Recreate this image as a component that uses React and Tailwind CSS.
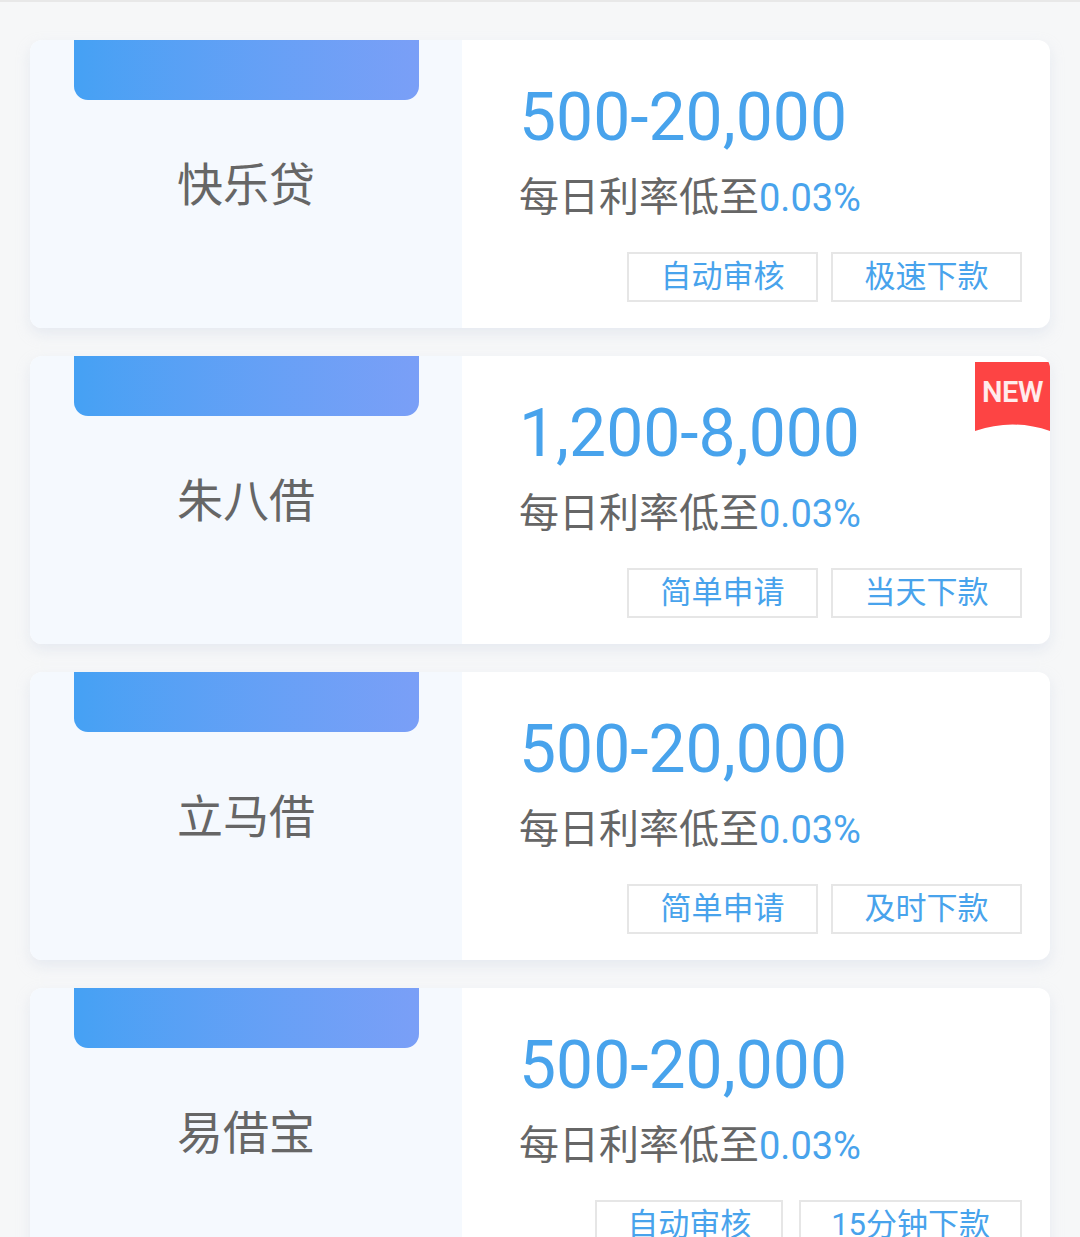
import React from 'react';

const loans = [
  { name: '快乐贷', amount: '500-20,000', tags: ['自动审核', '极速下款'] },
  { name: '朱八借', amount: '1,200-8,000', tags: ['简单申请', '当天下款'], isNew: true },
  { name: '立马借', amount: '500-20,000', tags: ['简单申请', '及时下款'] },
  { name: '易借宝', amount: '500-20,000', tags: ['自动审核', '15分钟下款'], auto: true },
];

function NewBadge() {
  return (
    <div className="absolute top-[6px] right-0 w-[75px] h-[69px]">
      <svg width="75" height="69" viewBox="0 0 75 69" className="absolute inset-0">
        <path d="M0 0 H75 V69 Q37.5 56 0 69 Z" fill="#fd4444" />
      </svg>
      <span className="relative block text-center pt-[14px] text-[29px] leading-[32px] font-semibold text-white/90 font-['Roboto',sans-serif] tracking-[-0.5px]">
        NEW
      </span>
    </div>
  );
}

function LoanCard({ loan }) {
  return (
    <div className="relative flex h-[288px] rounded-[12px] overflow-hidden bg-white shadow-[0_6px_14px_rgba(200,210,225,0.35)]">
      <div className="w-[432px] bg-[#f5f9fe] flex flex-col items-center">
        <div className="w-[345px] h-[60px] rounded-b-[14px] bg-gradient-to-r from-[#45a1f4] to-[#7a9ff7]" />
        <div className="mt-[53px] text-[46px] leading-[56px] text-[#666] font-['Noto_Sans_CJK_SC',sans-serif]">
          {loan.name}
        </div>
      </div>
      <div className="flex-1 pl-[57px] pr-[28px] flex flex-col">
        <div className="mt-[38px] text-[66px] leading-[80px] text-[#48a3ec] font-['Roboto',sans-serif]">
          {loan.amount}
        </div>
        <div className="mt-[12px] text-[40px] leading-[48px] text-[#666] font-['Noto_Sans_CJK_SC',sans-serif]">
          每日利率低至<span className="text-[38px] text-[#48a3ec] font-['Roboto',sans-serif]">0.03%</span>
        </div>
        <div className={`mt-[30px] flex justify-end ${loan.auto ? 'gap-[16px]' : 'gap-[13px]'}`}>
          {loan.tags.map((t) => (
            <div
              key={t}
              className={`h-[50px] border-2 border-[#e6e6e6] flex items-center justify-center text-[31px] text-[#48a3ec] font-['Roboto','Noto_Sans_CJK_SC',sans-serif] ${loan.auto ? 'px-[30px]' : 'w-[191px]'}`}
            >
              {t}
            </div>
          ))}
        </div>
      </div>
      {loan.isNew && <NewBadge />}
    </div>
  );
}

export default function App() {
  return (
    <div className="min-h-screen bg-[#f6f7f8] border-t-2 border-[#e8e8e8] px-[30px] pt-[38px] pb-[30px]">
      <div className="flex flex-col gap-[28px]">
        {loans.map((l) => (
          <LoanCard key={l.name} loan={l} />
        ))}
      </div>
    </div>
  );
}
